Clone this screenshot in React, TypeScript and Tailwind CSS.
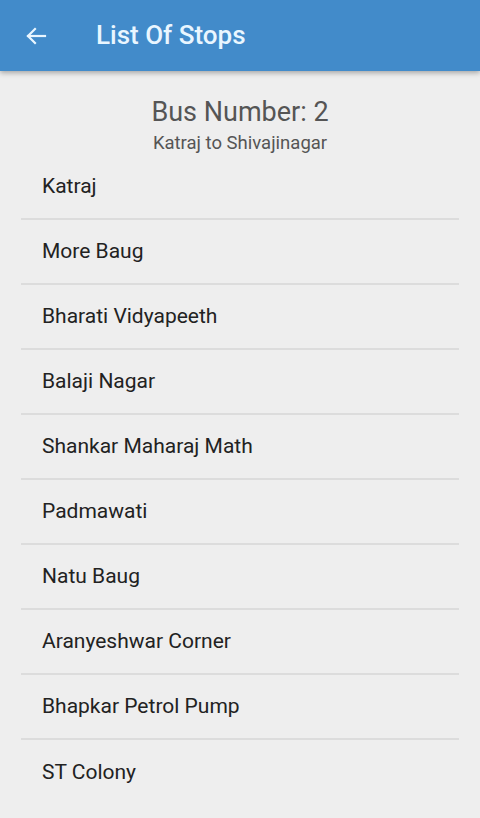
import React from "react";

const stops = [
  "Katraj",
  "More Baug",
  "Bharati Vidyapeeth",
  "Balaji Nagar",
  "Shankar Maharaj Math",
  "Padmawati",
  "Natu Baug",
  "Aranyeshwar Corner",
  "Bhapkar Petrol Pump",
  "ST Colony",
];

const App = () => {
  return (
    <div className="w-[480px] h-[818px] overflow-hidden bg-[#eeeeee] font-['Roboto',sans-serif]">
      <header className="relative z-10 h-[71px] bg-[#428bca] flex items-center shadow-[0_2px_5px_rgba(0,0,0,0.3)]">
        <svg
          className="ml-[24px]"
          width="24"
          height="24"
          viewBox="0 0 24 24"
          fill="none"
          stroke="#e9f6ff"
          strokeWidth="2.2"
          strokeLinecap="square"
        >
          <path d="M21 12H4" />
          <path d="M11 5l-7 7 7 7" />
        </svg>
        <h1 className="ml-[48px] text-[26px] font-medium text-[#e9f6ff]">
          List Of Stops
        </h1>
      </header>
      <div className="flex flex-col items-center pt-[25px]">
        <span className="text-[27px] leading-[32px] text-[#555555]">
          Bus Number: 2
        </span>
        <span className="text-[18.5px] leading-[22px] mt-[4px] text-[#555555]">
          Katraj to Shivajinagar
        </span>
      </div>
      <ul className="px-[21px] mt-[1px]">
        {stops.map((s, i) => (
          <li
            key={s}
            className={
              "h-[65px] flex items-center pl-[21px] text-[21px] text-[#222222] " +
              (i < stops.length - 1 ? "border-b-2 border-[#dcdcdc]" : "")
            }
          >
            {s}
          </li>
        ))}
      </ul>
    </div>
  );
};

export default App;
